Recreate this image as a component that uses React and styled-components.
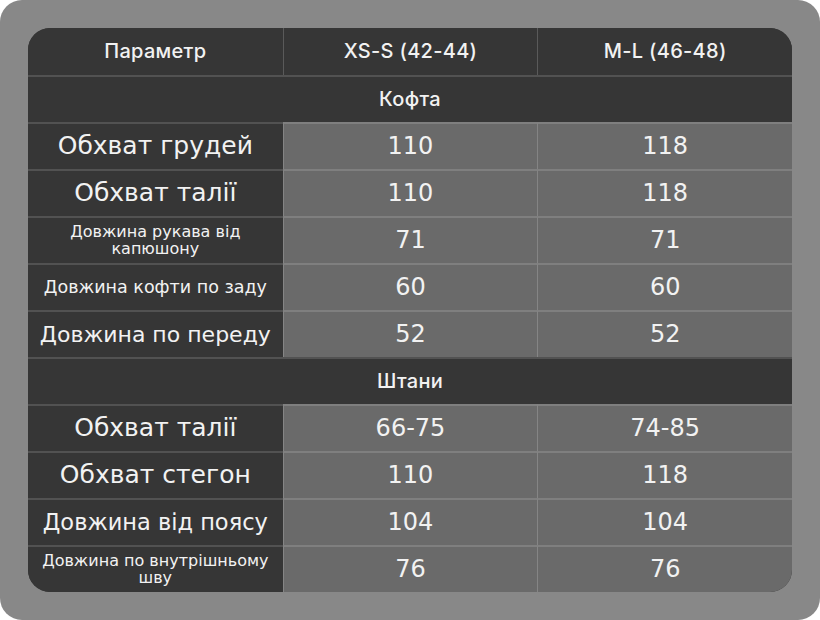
import React from 'react';
import styled, { createGlobalStyle } from 'styled-components';

const GlobalStyle = createGlobalStyle`
  html, body {
    margin: 0;
    padding: 0;
    background: #ffffff;
  }
  body {
    font-family: "DejaVu Sans", "Noto Sans", sans-serif;
    -webkit-font-smoothing: antialiased;
  }
`;

const Frame = styled.div`
  width: 820px;
  height: 620px;
  box-sizing: border-box;
  padding: 28px;
  background-color: #888888;
  border-radius: 22px;
`;

const Table = styled.div`
  display: grid;
  grid-template-columns: repeat(3, 1fr);
  grid-auto-rows: 47px;
  height: 564px;
  border-radius: 22px;
  overflow: hidden;
  background-color: #363636;
  color: #f2f2f2;
`;

const Cell = styled.div`
  display: flex;
  align-items: center;
  justify-content: center;
  text-align: center;
  box-sizing: border-box;
  line-height: 1.05;
  border-top: ${(p) => (p.$first ? 'none' : '2px solid rgba(255, 255, 255, 0.14)')};
  border-left: ${(p) => (p.$divided ? '1.5px solid rgba(255, 255, 255, 0.18)' : 'none')};
`;

const HeadCell = styled(Cell)`
  font-family: Inter, "DejaVu Sans", sans-serif;
  font-size: 20px;
  font-weight: 500;
  letter-spacing: 0.3px;
  background-color: #363636;
`;

const SectionCell = styled(Cell)`
  grid-column: 1 / -1;
  font-family: Inter, "DejaVu Sans", sans-serif;
  font-size: 20px;
  font-weight: 500;
  letter-spacing: 0.3px;
  background-color: #363636;
`;

const LabelCell = styled(Cell)`
  font-size: ${(p) => p.$size}px;
  padding: 0 6px;
  background-color: #363636;
`;

const ValueCell = styled(Cell)`
  font-size: 24px;
  background-color: #6a6a6a;
`;

const sections = [
  {
    title: 'Кофта',
    rows: [
      { label: 'Обхват грудей', size: 25, a: '110', b: '118' },
      { label: 'Обхват талії', size: 25, a: '110', b: '118' },
      { label: 'Довжина рукава від капюшону', size: 16, a: '71', b: '71' },
      { label: 'Довжина кофти по заду', size: 17.5, a: '60', b: '60' },
      { label: 'Довжина по переду', size: 22, a: '52', b: '52' },
    ],
  },
  {
    title: 'Штани',
    rows: [
      { label: 'Обхват талії', size: 25, a: '66-75', b: '74-85' },
      { label: 'Обхват стегон', size: 25, a: '110', b: '118' },
      { label: 'Довжина від поясу', size: 22.5, a: '104', b: '104' },
      { label: 'Довжина по внутрішньому шву', size: 16, a: '76', b: '76' },
    ],
  },
];

export default function App() {
  return (
    <>
      <GlobalStyle />
      <Frame>
        <Table>
          <HeadCell $first>Параметр</HeadCell>
          <HeadCell $first $divided>XS-S (42-44)</HeadCell>
          <HeadCell $first $divided>M-L (46-48)</HeadCell>
          {sections.map((s) => (
            <React.Fragment key={s.title}>
              <SectionCell>{s.title}</SectionCell>
              {s.rows.map((r) => (
                <React.Fragment key={s.title + r.label}>
                  <LabelCell $size={r.size}>{r.label}</LabelCell>
                  <ValueCell $divided>{r.a}</ValueCell>
                  <ValueCell $divided>{r.b}</ValueCell>
                </React.Fragment>
              ))}
            </React.Fragment>
          ))}
        </Table>
      </Frame>
    </>
  );
}
